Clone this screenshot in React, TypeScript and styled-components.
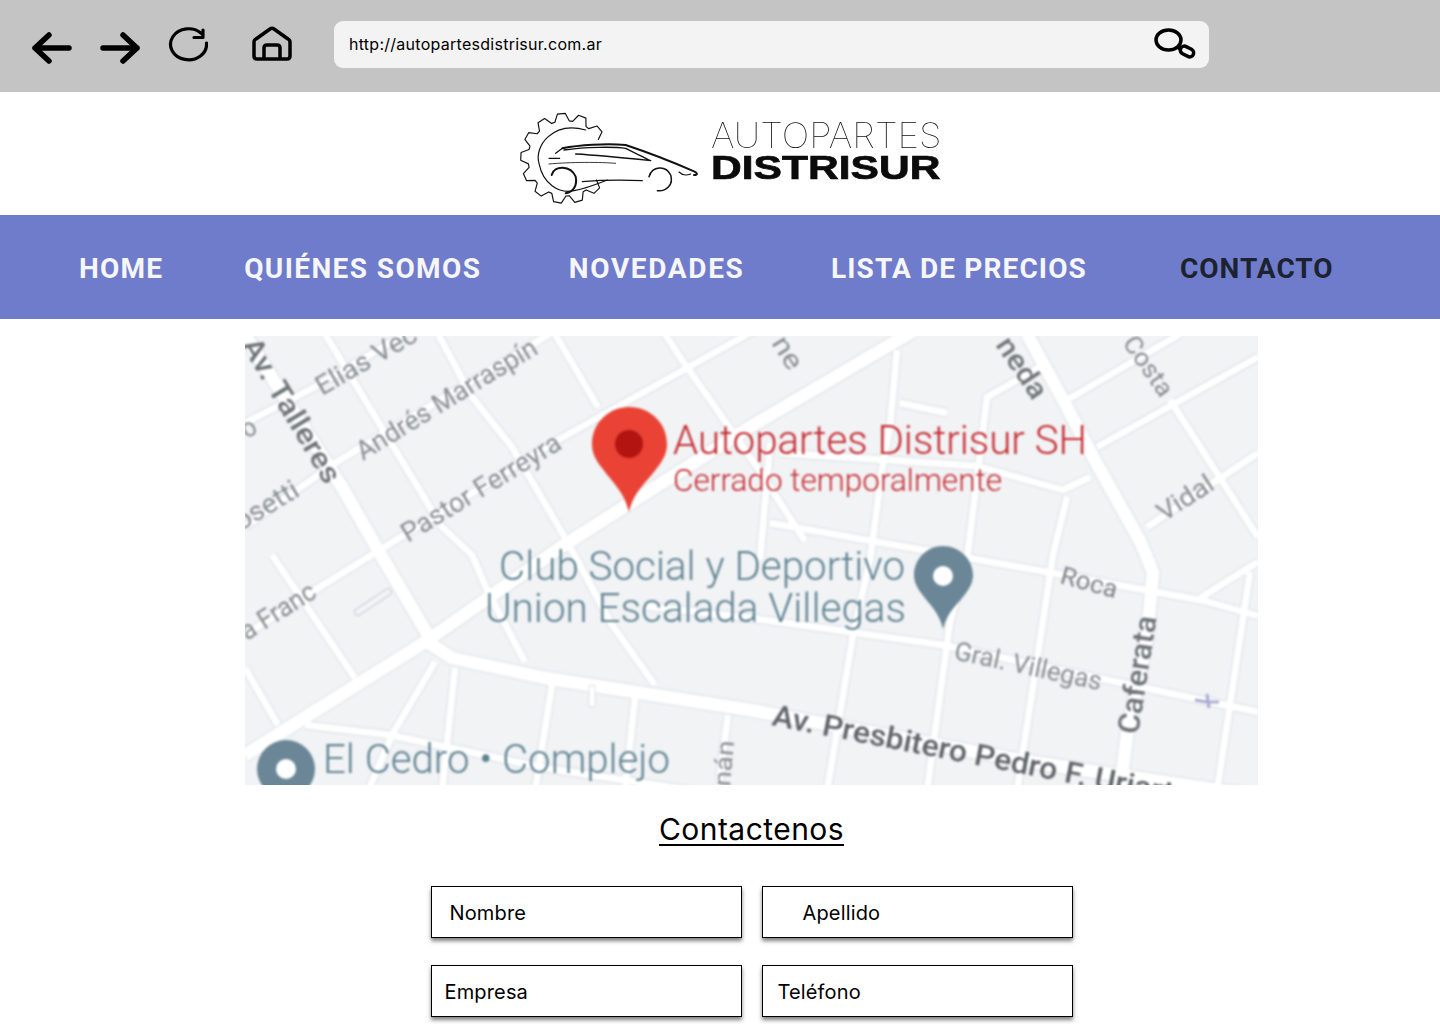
import React from 'react'
import styled, { createGlobalStyle } from 'styled-components'

const GlobalStyle = createGlobalStyle`
    html, body {
        margin: 0;
        background: #fff;
        font-family: Inter, "Liberation Sans", sans-serif;
    }
    #root {
        height: 1024px;
        overflow: hidden;
    }
`

const Toolbar = styled.header`
    display: flex;
    align-items: center;
    height: 92px;
    padding-left: 32px;
    box-sizing: border-box;
    background: #c4c4c4;
`

const NavIcons = styled.div`
    display: flex;
    align-self: flex-start;
    align-items: flex-start;
    gap: 28px;
`

const IconSvg = styled.svg<{ $left?: number; $top: number }>`
    display: block;
    width: 40px;
    height: 40px;
    margin-left: ${p => p.$left || 0}px;
    margin-top: ${p => p.$top}px;
    fill: none;
    stroke: #000;
    stroke-linecap: round;
    stroke-linejoin: round;
`

const AddressBar = styled.div`
    display: flex;
    align-items: center;
    justify-content: space-between;
    width: 875px;
    height: 47px;
    margin: 0 0 3px 42px;
    padding: 0 13px 0 15px;
    box-sizing: border-box;
    border-radius: 9px;
    background: #f4f3f4;
    color: #000;
    font-size: 16px;
    letter-spacing: 0.27px;
`

const AddressText = styled.span`
    margin-top: -2px;
`

const SearchSvg = styled.svg`
    width: 42px;
    height: 36px;
    fill: none;
    stroke: #000;
    stroke-width: 3.5px;
`

const LogoBand = styled.div`
    display: flex;
    align-items: flex-start;
    height: 123px;
    padding: 18px 0 0 519px;
    box-sizing: border-box;
`

const LogoMark = styled.svg`
    width: 180px;
    height: 100px;
    fill: none;
    stroke: #111;
    stroke-linecap: round;
    stroke-linejoin: round;
    filter: blur(0.35px);
`

const LogoWords = styled.div`
    display: flex;
    flex-direction: column;
    margin: 8px 0 0 12px;
    color: #0b0b0b;
`

const LogoThin = styled.span`
    font-size: 35px;
    font-weight: 100;
    line-height: 34px;
    transform: scaleX(1.05);
    transform-origin: left center;
`

const LogoBold = styled.span`
    margin-top: 1px;
    font-family: "Liberation Sans", sans-serif;
    font-size: 33px;
    font-weight: 700;
    line-height: 30px;
    -webkit-text-stroke: 0.7px #0b0b0b;
    transform: scaleX(1.29);
    transform-origin: left center;
`

const Nav = styled.nav`
    display: flex;
    align-items: center;
    height: 104px;
    padding: 2px 0 0 79px;
    box-sizing: border-box;
    background: #6f7ccb;
`

const NavLink = styled.a<{ $gap: number; $track: number; $active?: boolean }>`
    margin-right: ${p => p.$gap}px;
    color: ${p => (p.$active ? '#1d2230' : '#f6f6f8')};
    font-family: Roboto, sans-serif;
    font-size: 28px;
    font-weight: 700;
    letter-spacing: ${p => p.$track}px;
    white-space: nowrap;
`

const Main = styled.main`
    display: flex;
    flex-direction: column;
    align-items: center;
    width: 1013px;
    margin: 17px 0 0 245px;
`

const MapSvg = styled.svg`
    display: block;
    width: 1013px;
    height: 449px;
    background: #f1f3f5;
`

const MapLayer = styled.g`
    filter: blur(0.8px);
`

const RoadEdge = styled.polyline<{ $w: number }>`
    fill: none;
    stroke: #dcdfe3;
    stroke-width: ${p => p.$w + 2}px;
    stroke-linejoin: round;
`

const RoadFill = styled.polyline<{ $w: number }>`
    fill: none;
    stroke: #fff;
    stroke-width: ${p => p.$w}px;
    stroke-linejoin: round;
`

const MapLabel = styled.text<{ $size: number; $color: string; $weight?: number }>`
    font-family: Roboto, sans-serif;
    font-size: ${p => p.$size}px;
    font-weight: ${p => p.$weight || 400};
    fill: ${p => p.$color};
`

const Heading = styled.h1`
    margin: 28px 0 0;
    padding-top: 2px;
    border-bottom: 2px solid #000;
    color: #000;
    font-size: 30px;
    font-weight: 400;
    line-height: 29px;
    letter-spacing: 0.45px;
`

const FormGrid = styled.form`
    display: grid;
    grid-template-columns: 311px 311px;
    gap: 27px 20px;
    margin-top: 40px;
`

const Field = styled.div<{ $pad: number }>`
    display: flex;
    align-items: center;
    height: 52px;
    padding: 2px 0 0 ${p => p.$pad}px;
    box-sizing: border-box;
    border: 1.5px solid #000;
    background: #fff;
    box-shadow: 0 3px 4px rgba(0, 0, 0, 0.5);
    color: #000;
    font-size: 20px;
    letter-spacing: 0.15px;
`

type Road = [number, string]

const roads: Road[] = [
    // thin blocks first
    [7, '0,87 70,51 167,-6'],
    [7, '0,191 90,127 290,7 310,-6'],
    [7, '0,299 70,254 313,104 510,-6'],
    [7, '80,-2 197,191 227,219 243,256 280,326'],
    [7, '193,-2 227,61 267,111 323,207 367,289 410,349'],
    [7, '310,-2 353,71'],
    [7, '420,-2 437,24 510,128 560,205'],
    [7, '27,219 110,342'],
    [7, '0,332 33,389'],
    [7, '652,14 645,90 638,127 625,224 608,299 582,455'],
    [7, '525,107 515,224'],
    [7, '795,31 742,61 722,224 705,286 682,455'],
    [7, '655,67 702,77'],
    [7, '822,161 808,219 772,455'],
    [7, '535,117 732,130 818,154 845,141'],
    [7, '525,187 718,221 802,236 960,265 1013,280'],
    [7, '400,270 505,282 698,309 1013,376'],
    [7, '822,64 935,-2'],
    [7, '852,111 1013,21'],
    [7, '902,191 1013,117'],
    [7, '925,64 1013,201'],
    [7, '1005,236 972,455'],
    [7, '955,262 1013,226'],
    [7, '307,349 290,455'],
    [7, '390,362 380,455'],
    [7, '210,332 197,455'],
    [7, '190,326 147,399 123,455'],
    [7, '483,379 473,455'],
    [7, '60,389 145,399 300,432 450,455'],
    // wide avenues
    [13, '0,419 180,306 316,211 505,91 670,-6'],
    [13, '-2,-4 43,67 97,151 133,214 183,299 187,309 207,322 300,342 505,374 780,425 1013,460'],
    [13, '782,-2 822,71 848,121 895,205 908,236 902,302 882,399 875,455'],
]

const labels = [
    { t: 'Av. Talleres', x: -4, y: 9, r: 59, s: 29, c: '#6d7377', w: 500, l: 164 },
    { t: 'Elias Vec', x: 77, y: 60, r: -30, s: 27, c: '#888e92', l: 112 },
    { t: 'Andrés Marraspín', x: 118, y: 125, r: -31.5, s: 27, c: '#888e92', l: 207 },
    { t: 'Pastor Ferreyra', x: 163, y: 207, r: -31.5, s: 27, c: '#888e92', l: 182 },
    { t: 'osetti', x: -4, y: 195, r: -31, s: 27, c: '#888e92', l: 70 },
    { t: 'o', x: 2, y: 103, r: -31, s: 27, c: '#888e92', l: 14 },
    { t: 'a Franc', x: 2, y: 305, r: -32, s: 27, c: '#888e92', l: 84 },
    { t: 'ne', x: 526, y: 7, r: 58, s: 27, c: '#888e92', l: 34 },
    { t: 'neda', x: 750, y: 9, r: 56, s: 29, c: '#70767a', w: 500, l: 68 },
    { t: 'Costa', x: 877, y: 7, r: 55, s: 25, c: '#888e92', l: 68 },
    { t: 'Vidal', x: 919, y: 186, r: -33, s: 26, c: '#888e92', l: 62 },
    { t: 'Roca', x: 814, y: 247, r: 15, s: 25, c: '#7d8286', l: 58 },
    { t: 'Gral. Villegas', x: 708, y: 323, r: 12, s: 26, c: '#888e92', l: 150 },
    { t: 'Caferata', x: 893, y: 399, r: -81, s: 30, c: '#6d7377', w: 500, l: 119 },
    { t: 'Av. Presbitero Pedro F. Uriarte', x: 526, y: 389, r: 11, s: 30, c: '#5f6469', w: 500, l: 425 },
    { t: 'nán', x: 485, y: 451, r: -85, s: 24, c: '#888e92', l: 46 },
]

const placeLabels = [
    { t: 'Autopartes Distrisur SH', x: 428, y: 118, s: 40, c: '#c5282f', l: 414 },
    { t: 'Cerrado temporalmente', x: 428, y: 155, s: 31, c: '#c5282f', l: 329 },
    { t: 'Club Social y Deportivo', x: 254, y: 244, s: 40, c: '#5f8291', l: 406 },
    { t: 'Union Escalada Villegas', x: 240, y: 286, s: 40, c: '#5f8291', l: 421 },
    { t: 'El Cedro • Complejo', x: 78, y: 437, s: 40, c: '#5f8291', l: 347 },
]

const MapView = () =>
    <MapSvg viewBox="0 0 1013 449">
        <MapLayer>
            { roads.map(([w, pts], i) => <RoadEdge key={ i } $w={ w } points={ pts }/>) }
            { roads.map(([w, pts], i) => <RoadFill key={ i } $w={ w } points={ pts }/>) }
            <path d="M113 276 L143 256" fill="none" stroke="#d3d6da" strokeWidth="8" strokeLinecap="round"/>
            <path d="M113 276 L143 256" fill="none" stroke="#f4f5f6" strokeWidth="5" strokeLinecap="round"/>
            <path d="M347 352 V368" fill="none" stroke="#dcdfe3" strokeWidth="7" strokeLinecap="round"/>
            <path d="M347 352 V368" fill="none" stroke="#fff" strokeWidth="5" strokeLinecap="round"/>
            { labels.map(l =>
                <MapLabel
                    key={ l.t }
                    x={ l.x }
                    y={ l.y }
                    $size={ l.s }
                    $color={ l.c }
                    $weight={ l.w }
                    textLength={ l.l }
                    lengthAdjust="spacingAndGlyphs"
                    transform={ `rotate(${l.r} ${l.x} ${l.y})` }
                >
                    { l.t }
                </MapLabel>
            ) }
            { placeLabels.map(l =>
                <MapLabel
                    key={ l.t }
                    x={ l.x }
                    y={ l.y }
                    $size={ l.s }
                    $color={ l.c }
                    $weight={ 300 }
                    textLength={ l.l }
                    lengthAdjust="spacingAndGlyphs"
                >
                    { l.t }
                </MapLabel>
            ) }
            <path
                d="M384 176 C379 155 367 146 357 132 C349 122 347 115 347 108 C347 87 364 71 384 71 C405 71 422 87 422 108 C422 115 420 122 412 132 C402 146 389 155 384 176 Z"
                fill="#ea4335"
            />
            <circle cx="384" cy="108" r="14" fill="#b31412"/>
            <path
                d="M698 293 C694 276 684 268 676 257 C671 250 669 245 669 239 C669 223 682 210 698 210 C714 210 728 223 728 239 C728 245 726 250 721 257 C713 268 702 276 698 293 Z"
                fill="#6b8797"
            />
            <circle cx="698" cy="240" r="10" fill="#fff"/>
            <circle cx="41" cy="433" r="29" fill="#6b8797"/>
            <circle cx="41" cy="433" r="10" fill="#fff"/>
            <path d="M950 364 L962 366 L974 366 M962 358 L964 372" fill="none" stroke="#a6add0" strokeWidth="3"/>
        </MapLayer>
    </MapSvg>

// teeth of the gear, walked from the top right round the left side to the bottom right
const gearPath = () => {
    const cx = 190
    const cy = 185
    const out = 135
    const low = 113
    const parts: string[] = []
    const pt = (deg: number, r: number) => {
        const a = (deg * Math.PI) / 180
        return `${(cx + r * Math.cos(a)).toFixed(1)} ${(cy + r * Math.sin(a)).toFixed(1)}`
    }
    for (let i = 0; i < 11; i++) {
        const d = -30 - i * 27.3
        parts.push(pt(d, low), pt(d - 6, out), pt(d - 16, out), pt(d - 22, low))
    }
    return 'M' + parts.join(' L')
}

const Logo = () =>
    <LogoMark viewBox="50 40 540 300">
        <path d={ gearPath() } strokeWidth="3.5"/>
        <path d="M250 100 C150 72 95 150 110 200 C122 262 170 292 215 282 C250 276 285 262 315 250" strokeWidth="3.5"/>
        <path d="M180 155 C230 145 310 140 370 145 C430 165 520 200 570 222 C590 230 585 236 575 235" strokeWidth="6"/>
        <path d="M185 160 C250 150 340 150 370 155 C400 170 430 185 445 192 C380 185 280 175 220 172" strokeWidth="4"/>
        <path d="M180 155 L160 170 M140 185 H172 M530 226 C540 236 555 236 565 232" strokeWidth="3.5"/>
        <path d="M140 202 C200 196 300 196 340 200" strokeWidth="2.5"/>
        <path d="M240 255 C300 250 370 250 420 252" strokeWidth="3.5"/>
        <path d="M440 240 C450 208 490 205 505 235 C515 265 490 285 465 282" strokeWidth="4.5"/>
        <path d="M148 235 C155 205 205 205 220 240 C225 265 215 285 190 290" strokeWidth="6"/>
    </LogoMark>

const App = () =>
    <>
        <GlobalStyle/>
        <Toolbar>
            <NavIcons>
                <IconSvg viewBox="0 0 40 40" strokeWidth="5.5" $top={ 32 }>
                    <path d="M37 16 H3 M17 3 L3 16 L17 29"/>
                </IconSvg>
                <IconSvg viewBox="0 0 40 40" strokeWidth="5.5" $top={ 32 }>
                    <path d="M3 16 H37 M23 3 L37 16 L23 29"/>
                </IconSvg>
                <IconSvg viewBox="0 0 40 40" strokeWidth="3.2" $top={ 27 }>
                    <path d="M33.5 6.5 A18 15.5 0 1 0 38.5 16 M35 3 V10.5 H26"/>
                </IconSvg>
                <IconSvg viewBox="0 0 40 40" strokeWidth="3.5" $left={ 16 } $top={ 26 }>
                    <path d="M2 16 Q2 14 4 13 L18 3 Q20 1.5 22 3 L36 13 Q38 14 38 16 V30 Q38 33 35 33 H5 Q2 33 2 30 Z M12 33 V22 Q12 19 15 19 H25 Q28 19 28 22 V33"/>
                </IconSvg>
            </NavIcons>
            <AddressBar>
                <AddressText>http://autopartesdistrisur.com.ar</AddressText>
                <SearchSvg viewBox="0 0 42 36">
                    <ellipse cx="14.5" cy="13" rx="12.5" ry="10"/>
                    <path d="M23.5 20 L27 22.5"/>
                    <rect x="26" y="20.5" width="14" height="8" rx="4" transform="rotate(27 33 24.5)"/>
                </SearchSvg>
            </AddressBar>
        </Toolbar>
        <LogoBand>
            <Logo/>
            <LogoWords>
                <LogoThin>AUTOPARTES</LogoThin>
                <LogoBold>DISTRISUR</LogoBold>
            </LogoWords>
        </LogoBand>
        <Nav>
            <NavLink $gap={ 81 } $track={ 1.2 }>HOME</NavLink>
            <NavLink $gap={ 87.5 } $track={ 1.4 }>QUIÉNES SOMOS</NavLink>
            <NavLink $gap={ 86.5 } $track={ 1.65 }>NOVEDADES</NavLink>
            <NavLink $gap={ 93 } $track={ 1.13 }>LISTA DE PRECIOS</NavLink>
            <NavLink $gap={ 0 } $track={ 1 } $active>CONTACTO</NavLink>
        </Nav>
        <Main>
            <MapView/>
            <Heading>Contactenos</Heading>
            <FormGrid>
                <Field $pad={ 18 }>Nombre</Field>
                <Field $pad={ 40 }>Apellido</Field>
                <Field $pad={ 13 }>Empresa</Field>
                <Field $pad={ 15 }>Teléfono</Field>
            </FormGrid>
        </Main>
    </>

export default App
